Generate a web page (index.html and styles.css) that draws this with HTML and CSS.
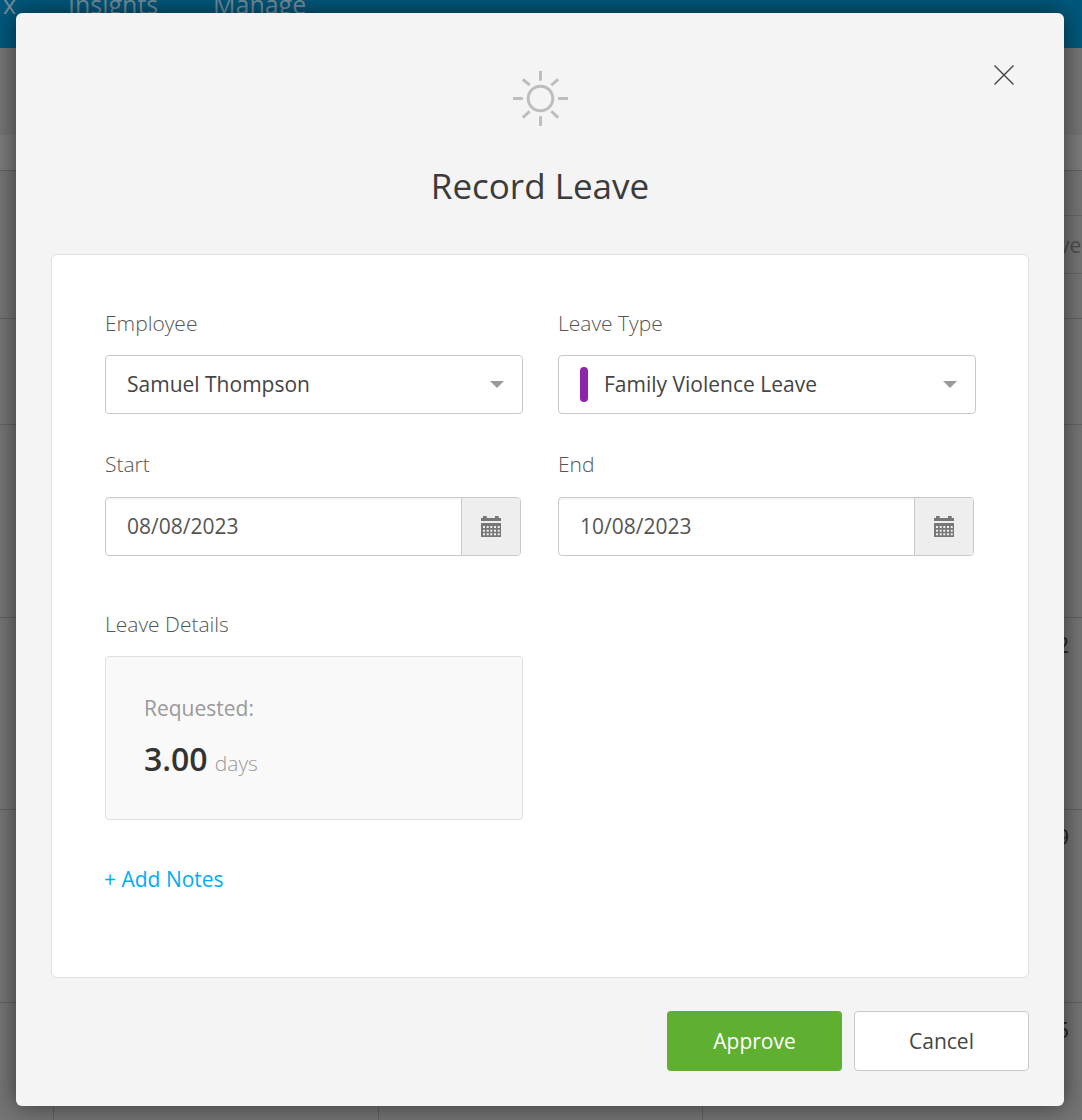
FILE: index.html
```html
<!DOCTYPE html>
<html lang="en">
<head>
<meta charset="utf-8">
<title>Record Leave</title>
<link rel="stylesheet" href="styles.css">
</head>
<body>
<div class="page">
  <header class="topbar">
    <span class="nav nav-x">x</span>
    <span class="nav nav-insights">Insights</span>
    <span class="nav">Manage</span>
  </header>
  <div class="band band-a"></div>
  <div class="band band-b"></div>
  <div class="row row-1"><span class="edge-btn">ve</span></div>
  <div class="row row-2"></div>
  <div class="row row-3"></div>
  <div class="row row-4"><span class="edge-num">2</span></div>
  <div class="row row-5"><span class="edge-num">9</span></div>
  <div class="row-last">
    <span class="edge-num">5</span>
    <div class="cell cell-1"></div>
    <div class="cell cell-2"></div>
    <div class="cell cell-3"></div>
  </div>
</div>

<div class="modal">
  <button class="close" aria-label="Close">
    <svg width="20" height="20" viewBox="0 0 20 20"><path d="M.5.5l19 19M19.500.5l-19 19" fill="none" stroke="#444" stroke-width="1.400"/></svg>
  </button>
  <div class="modal-head">
    <svg class="sun" width="55" height="55" viewBox="0 0 56 56">
      <g fill="none" stroke="#bdbdbd" stroke-width="3">
        <circle cx="28" cy="28" r="12.500"/>
        <path d="M28 0v10M28 46v10M0 28h10M46 28h10M10 8.500l7 6M46 8.500l-7 6M10 47.500l7-6.500M46 47.500l-7-6.500"/>
      </g>
    </svg>
    <h1 class="title">Record Leave</h1>
  </div>

  <div class="panel">
    <div class="grid">
      <div class="field">
        <label class="label">Employee</label>
        <div class="select"><span class="value">Samuel Thompson</span><span class="caret"></span></div>
      </div>
      <div class="field">
        <label class="label">Leave Type</label>
        <div class="select"><span class="swatch"></span><span class="value">Family Violence Leave</span><span class="caret"></span></div>
      </div>
      <div class="field">
        <label class="label label-flush">Start</label>
        <div class="date"><span class="date-value">08/08/2023</span><span class="date-btn">
          <svg width="20" height="21" viewBox="0 0 20 21"><use href="#cal"/></svg></span></div>
      </div>
      <div class="field">
        <label class="label label-flush">End</label>
        <div class="date"><span class="date-value">10/08/2023</span><span class="date-btn">
          <svg width="20" height="21" viewBox="0 0 20 21"><use href="#cal"/></svg></span></div>
      </div>
    </div>

    <div class="details">
      <div class="label">Leave Details</div>
      <div class="details-box">
        <div class="req-label">Requested:</div>
        <div class="req-value"><strong class="num">3.00</strong> <span class="unit">days</span></div>
      </div>
    </div>
    <a class="add-notes" href="#">+ Add Notes</a>
  </div>

  <div class="actions">
    <button class="btn btn-approve">Approve</button>
    <button class="btn btn-cancel">Cancel</button>
  </div>
</div>

<svg class="defs" width="0" height="0">
  <defs>
    <symbol id="cal" viewBox="0 0 20 21">
      <path fill="#777" fill-rule="evenodd" d="M2 0h3.700v2h8.300V0h3.700v2H20v3H0V2h2zM0 7h20v14H0zM2 10v2h2v-2zM5.700 10v2h2v-2zM9.300 10v2h2v-2zM13 10v2h2v-2zM16.700 10v2h2v-2zM2 13.700v2h2v-2zM5.700 13.700v2h2v-2zM9.300 13.700v2h2v-2zM13 13.700v2h2v-2zM16.700 13.700v2h2v-2zM2 17.300v2h2v-2zM5.700 17.300v2h2v-2zM9.300 17.300v2h2v-2zM13 17.300v2h2v-2zM16.700 17.300v2h2v-2z"/>
    </symbol>
  </defs>
</svg>
</body>
</html>
```
FILE: styles.css
```css
* { box-sizing: border-box; }
html, body { margin: 0; padding: 0; height: 100%; }
body {
  font-family: "Open Sans", "Liberation Sans", sans-serif;
  background: #757575;
  overflow: hidden;
  position: relative;
  width: 1082px;
  height: 1120px;
}
.defs { position: absolute; }

/* dimmed page behind the dialog */
.page { height: 1120px; color: #333; }
.topbar {
  height: 48px;
  background: #00597d;
  display: flex;
  align-items: flex-end;
  padding-left: 3px;
  overflow: hidden;
}
.nav {
  font-size: 25px;
  line-height: 34px;
  color: #75909d;
  margin-bottom: 27px;
  white-space: nowrap;
}
.nav-x { width: 65px; }
.nav-insights { width: 145px; }
.band { border-bottom: 1px solid #626262; }
.band-a { height: 87px; background: #757575; border-bottom: 0; }
.band-b { height: 36px; background: #7c7c7c; }
.row {
  border-bottom: 1px solid #626262;
  position: relative;
  display: flex;
  justify-content: flex-end;
}
.row-1 { height: 148px; }
.row-2 { height: 106px; }
.row-3 { height: 193px; }
.row-4 { height: 192px; }
.row-5 { height: 193px; }
.row-last { display: flex; height: 118px; padding-left: 53px; position: relative; }
.cell { width: 325px; border-left: 1px solid #626262; }
.cell-2 { width: 324px; }
.edge-btn {
  position: absolute;
  left: 1045px;
  top: 44px;
  width: 60px;
  height: 59px;
  border: 1px solid #666;
  font-size: 21px;
  line-height: 59px;
  color: #4d4d4d;
  padding-left: 13px;
}
.edge-num {
  position: absolute;
  left: 1057px;
  top: 13px;
  font-size: 21px;
  line-height: 29px;
  color: #222;
}

/* dialog */
.modal {
  position: absolute;
  left: 16px;
  top: 13px;
  width: 1048px;
  height: 1093px;
  padding: 58px 35px 35px;
  background: #f4f4f4;
  border-radius: 6px;
  box-shadow: 0 0 24px rgba(0, 0, 0, .55);
  display: flex;
  flex-direction: column;
}
.close {
  position: absolute;
  right: 50px;
  top: 52px;
  width: 20px;
  height: 20px;
  padding: 0;
  border: 0;
  background: none;
  display: flex;
}
.modal-head {
  display: flex;
  flex-direction: column;
  align-items: center;
  height: 183px;
}
.sun { display: block; }
.title {
  margin: 36px 0 0;
  font-size: 35px;
  line-height: 48px;
  font-weight: 400;
  color: #3b3b3b;
}
.panel {
  width: 978px;
  height: 724px;
  background: #fff;
  border: 1px solid #e0e0e0;
  border-radius: 6px;
  padding: 53px 53px 0;
}
.grid {
  display: grid;
  grid-template-columns: 418px 418px;
  column-gap: 35px;
  row-gap: 36px;
}
.label {
  display: block;
  font-size: 21px;
  line-height: 29px;
  font-weight: 300;
  color: #555;
  margin-top: 1px;
  margin-bottom: 17px;
}
.label-flush {
  margin-top: 0;
  margin-bottom: 18px;
}
.select {
  height: 59px;
  border: 1px solid #c9c9c9;
  border-radius: 4px;
  background: #fff;
  display: flex;
  align-items: center;
  padding: 0 18px 0 21px;
}
.value {
  font-size: 21px;
  color: #444;
  flex: 1;
  white-space: nowrap;
  padding-bottom: 2px;
}
.swatch {
  width: 8px;
  height: 35px;
  border-radius: 4px;
  background: #8e24aa;
  margin-right: 16px;
}
.caret {
  width: 0;
  height: 0;
  border-left: 7px solid transparent;
  border-right: 7px solid transparent;
  border-top: 7px solid #999;
}
.date {
  width: 416px;
  height: 59px;
  border: 1px solid #c9c9c9;
  border-radius: 4px;
  background: #fff;
  box-shadow: inset 0 2px 2px rgba(0, 0, 0, .04);
  display: flex;
  overflow: hidden;
}
.date-value {
  flex: 1;
  font-size: 21px;
  line-height: 57px;
  padding-left: 21px;
  color: #555;
}
.date-btn {
  width: 59px;
  background: #eeeeee;
  border-left: 1px solid #c9c9c9;
  display: flex;
  align-items: center;
  justify-content: center;
  padding: 0 1px 1px 0;
}
.details { margin-top: 54px; width: 418px; }
.details-box {
  height: 164px;
  background: #f9f9f9;
  border: 1px solid #e0e0e0;
  border-radius: 4px;
  padding: 37px 38px 0;
}
.req-label {
  font-size: 21px;
  line-height: 29px;
  color: #9a9a9a;
}
.req-value { margin-top: 14px; line-height: 44px; }
.num {
  font-size: 32px;
  font-weight: 560;
  color: #333;
}
.unit {
  font-size: 21px;
  font-weight: 300;
  color: #999;
  margin-left: 3px;
}
.add-notes {
  display: block;
  margin-top: 45px;
  margin-left: -1px;
  font-size: 21px;
  line-height: 29px;
  color: #00aeef;
  text-decoration: none;
  width: max-content;
}
.actions {
  display: flex;
  justify-content: flex-end;
  gap: 12px;
  margin-top: 33px;
}
.btn {
  width: 175px;
  height: 60px;
  border-radius: 4px;
  font-family: inherit;
  font-size: 21px;
  padding: 0;
}
.btn-approve {
  background: #5fb030;
  border: 0;
  color: #fff;
  font-weight: 500;
}
.btn-cancel {
  background: #fff;
  border: 1px solid #c9c9c9;
  color: #444;
}
```
